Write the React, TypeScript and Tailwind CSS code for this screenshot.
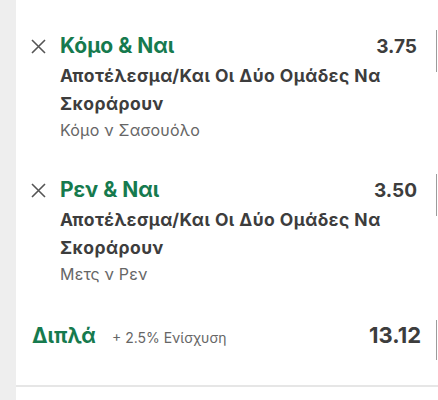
const bets = [
  {
    title: 'Κόμο & Ναι',
    odds: '3.75',
    market: 'Αποτέλεσμα/Και Οι Δύο Ομάδες Να Σκοράρουν',
    event: 'Κόμο ν Σασουόλο',
  },
  {
    title: 'Ρεν & Ναι',
    odds: '3.50',
    market: 'Αποτέλεσμα/Και Οι Δύο Ομάδες Να Σκοράρουν',
    event: 'Μετς ν Ρεν',
  },
]

function CloseIcon() {
  return (
    <svg width="15" height="15" viewBox="0 0 15 15" fill="none" stroke="#555555" strokeWidth="1.6">
      <path d="M1 1 L14 14 M14 1 L1 14" />
    </svg>
  )
}

function BetRow({ bet }: { bet: (typeof bets)[number] }) {
  return (
    <div className="flex items-start">
      {/* remove */}
      <div className="w-[29px] shrink-0 pt-[5px]">
        <CloseIcon />
      </div>

      <div className="w-[357px] shrink-0">
        <div className="flex items-baseline justify-between">
          <span className="text-[21px] leading-[24px] font-bold text-[#167a4e]">{bet.title}</span>
          <span className="text-[19px] leading-[24px] font-bold text-[#3d3d3d]">{bet.odds}</span>
        </div>
        <p className="mt-[3px] pr-[20px] text-[17.5px] leading-[28px] font-bold tracking-[0.45px] text-[#3d3d3d]">
          {bet.market}
        </p>
        <p className="text-[16px] leading-[24px] tracking-[0.2px] text-[#666666]">{bet.event}</p>
      </div>

      {/* stake box, cut off by the edge */}
      <div className="ml-[19px] mt-[-4px] h-[42px] w-[60px] shrink-0 border-l border-[#9c9c9c]" />
    </div>
  )
}

export default function App() {
  return (
    <div className="flex h-[400px] w-[438px] overflow-hidden bg-[#eeeeee] font-['Inter',sans-serif]">
      <div className="w-4 shrink-0" />

      <div className="flex min-w-0 flex-1 flex-col overflow-hidden bg-white">
        <div className="flex flex-col gap-[36px] pl-[15px] pt-[34px]">
          {bets.map((bet) => (
            <BetRow key={bet.title} bet={bet} />
          ))}
        </div>

        {/* totals */}
        <div className="mt-[35px] flex items-start pl-[16px]">
          <div className="flex w-[389px] shrink-0 items-baseline">
            <span className="text-[21px] leading-[28px] font-bold text-[#167a4e]">Διπλά</span>
            <span className="ml-4 text-[14px] text-[#666666]">+ 2.5% Ενίσχυση</span>
            <span className="ml-auto text-[22px] leading-[28px] font-bold text-[#3d3d3d]">13.12</span>
          </div>
          <div className="ml-[15px] mt-[-1px] h-[40px] w-[60px] shrink-0 border-l border-[#9c9c9c]" />
        </div>

        <div className="mt-[25px] h-[2px] bg-[#e6e6e6]" />
      </div>
    </div>
  )
}
